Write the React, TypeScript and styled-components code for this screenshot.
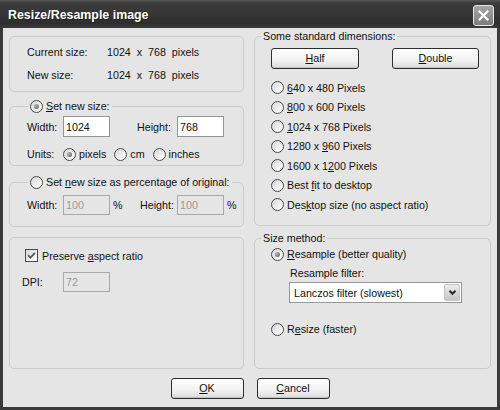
import React from "react";
import styled, { createGlobalStyle } from "styled-components";

const FONT = `"Liberation Sans", Arial, sans-serif`;
const BG = "#e5e5e5";
const FS = "10.7px";

const GlobalStyle = createGlobalStyle`
  html, body { margin: 0; padding: 0; background: #ffffff; }
  body { font-family: ${FONT}; font-size: ${FS}; color: #111; }
  * { box-sizing: border-box; }
`;

const Window = styled.div`
  width: 500px;
  height: 410px;
  display: flex;
  flex-direction: column;
  overflow: hidden;
`;

const TitleBar = styled.div`
  height: 28px;
  flex: none;
  display: flex;
  justify-content: space-between;
  align-items: flex-start;
  padding: 0 6px 0 8px;
  background: linear-gradient(#555555 0, #3c3c3c 3px, #363636 45%, #2e2e2e 85%, #3e3e3e 100%);
`;

const Title = styled.span`
  margin-top: 8px;
  font: bold 12.4px/15px ${FONT};
  color: #ffffff;
  text-shadow: 1px 1px 0 #1c1c1c;
`;

const CloseButton = styled.div`
  margin-top: 5px;
  width: 21px;
  height: 21px;
  border: 1px solid #e6e6e6;
  border-radius: 3px;
  background: linear-gradient(#a6a6a6, #7c7c7c);
  display: flex;
  align-items: center;
  justify-content: center;
`;

const Body = styled.div`
  flex: 1;
  background: ${BG};
  border: 3px solid #3a3a3a;
  border-top: none;
  display: grid;
  grid-template-columns: 235px 1fr;
  align-content: start;
  column-gap: 10px;
  padding: 8px 6px 0 6px;
`;

const Column = styled.div`
  display: flex;
  flex-direction: column;
`;

const Group = styled.div<{ $h: number; $mt?: number; $pad: string }>`
  position: relative;
  height: ${(p) => p.$h}px;
  margin-top: ${(p) => p.$mt ?? 0}px;
  padding: ${(p) => p.$pad};
  border: 1px solid #cbcbcb;
  border-radius: 5px;
  display: flex;
  flex-direction: column;
  align-items: flex-start;
`;

const Legend = styled.div<{ $left: number }>`
  position: absolute;
  top: -7px;
  left: ${(p) => p.$left}px;
  height: 13px;
  line-height: 13px;
  padding: 0 2px;
  background: ${BG};
  display: flex;
  align-items: center;
  gap: 3px;
  white-space: nowrap;
`;

const InfoGrid = styled.div`
  display: grid;
  grid-template-columns: 80px auto;
  grid-auto-rows: 14px;
  row-gap: 9px;
  line-height: 14px;
`;

const Value = styled.span`
  word-spacing: 3px;
`;

const FieldRow = styled.div<{ $h: number; $mt?: number; $ml?: number }>`
  display: flex;
  align-items: center;
  height: ${(p) => p.$h}px;
  margin-top: ${(p) => p.$mt ?? 0}px;
  margin-left: ${(p) => p.$ml ?? 0}px;
  white-space: nowrap;
`;

const Label = styled.span<{ $w?: number; $ml?: number }>`
  width: ${(p) => (p.$w ? `${p.$w}px` : "auto")};
  margin-left: ${(p) => p.$ml ?? 0}px;
  flex: none;
`;

const TextBox = styled.input<{ $h: number }>`
  width: 47px;
  height: ${(p) => p.$h}px;
  flex: none;
  margin: 0;
  padding: 0 2px;
  font: ${FS} ${FONT};
  color: #111;
  background: #ffffff;
  border: 1px solid #949494;
  outline: none;
  &:disabled {
    background: ${BG};
    color: #9a9a9a;
    border-color: #a8a8a8;
  }
`;

const Percent = styled.span<{ $w?: number }>`
  width: ${(p) => (p.$w ? `${p.$w}px` : "auto")};
  padding-left: 3px;
  flex: none;
`;

const RadioGroupRow = styled.div`
  display: flex;
  align-items: center;
  gap: 8px;
`;

const Choice = styled.label`
  display: flex;
  align-items: center;
  gap: 3px;
  white-space: nowrap;
`;

const RadioCircle = styled.span<{ $on?: boolean }>`
  position: relative;
  width: 13px;
  height: 13px;
  flex: none;
  border-radius: 50%;
  border: 1px solid #4a4a4a;
  background: linear-gradient(135deg, #d6d6d6 0%, #f4f4f4 70%, #ffffff 100%);
  &::after {
    content: "";
    display: ${(p) => (p.$on ? "block" : "none")};
    position: absolute;
    left: 3px;
    top: 3px;
    width: 5px;
    height: 5px;
    border-radius: 50%;
    background: radial-gradient(circle at 35% 35%, #b4b4b4, #5c5c5c);
  }
`;

const CheckBox = styled.span`
  width: 13px;
  height: 13px;
  flex: none;
  border: 1px solid #4a4a4a;
  background: linear-gradient(135deg, #d6d6d6 0%, #f4f4f4 70%, #ffffff 100%);
  display: flex;
  align-items: center;
  justify-content: center;
`;

const ButtonRow = styled.div`
  align-self: stretch;
  display: flex;
  justify-content: space-between;
`;

const PushButton = styled.div<{ $w: number }>`
  width: ${(p) => p.$w}px;
  height: 21px;
  border: 1px solid #2e2e2e;
  border-radius: 3px;
  background: linear-gradient(#ffffff 0%, #f2f2f2 60%, #e0e0e0 90%, #d2d2d2 100%);
  box-shadow: inset 0 -1px 0 #c4c4c4;
  display: flex;
  align-items: center;
  justify-content: center;
  line-height: 13px;
`;

const RadioList = styled.div`
  margin-top: 9px;
  display: flex;
  flex-direction: column;
`;

const ListRow = styled.div`
  height: 19.5px;
  display: flex;
  align-items: center;
`;

const SubLabel = styled.div`
  margin: 4px 0 0 19px;
  line-height: 14px;
`;

const Select = styled.div`
  margin: 2px 0 0 18px;
  width: 173px;
  height: 21px;
  border: 1px solid #979797;
  background: #ffffff;
  display: flex;
  align-items: center;
  padding: 0 1px 0 4px;
`;

const SelectText = styled.span`
  flex: 1;
`;

const DropButton = styled.span`
  width: 16px;
  height: 17px;
  border: 1px solid #c6c6c6;
  border-radius: 2px;
  background: linear-gradient(#ececec, #c6c6c6);
  display: flex;
  align-items: center;
  justify-content: center;
`;

const Footer = styled.div`
  grid-column: 1 / -1;
  margin-top: 9px;
  display: flex;
  justify-content: center;
  gap: 13px;
`;

const Acc = styled.u`
  text-decoration: underline;
  text-underline-offset: 1px;
`;

const Radio = ({ on, children }: { on?: boolean; children: React.ReactNode }) => (
  <Choice>
    <RadioCircle $on={on} />
    <span>{children}</span>
  </Choice>
);

export default function App() {
  return (
    <>
      <GlobalStyle />
      <Window>
        <TitleBar>
          <Title>Resize/Resample image</Title>
          <CloseButton>
            <svg width="11" height="11" viewBox="0 0 11 11">
              <path d="M1.5 1.5 L9.5 9.5 M9.5 1.5 L1.5 9.5" stroke="#ffffff" strokeWidth="2.2" strokeLinecap="square" />
            </svg>
          </CloseButton>
        </TitleBar>
        <Body>
          <Column>
            <Group $h={56} $pad="8px 0 0 17px">
              <InfoGrid>
                <span>Current size:</span>
                <Value>1024 x 768 pixels</Value>
                <span>New size:</span>
                <Value>1024 x 768 pixels</Value>
              </InfoGrid>
            </Group>

            <Group $h={60} $mt={14} $pad="9px 0 0 17px">
              <Legend $left={18}>
                <RadioCircle $on />
                <span>
                  <Acc>S</Acc>et new size:
                </span>
              </Legend>
              <FieldRow $h={21}>
                <Label $w={36}>Width:</Label>
                <TextBox $h={21} defaultValue="1024" />
                <Label $w={40} $ml={27}>Height:</Label>
                <TextBox $h={21} defaultValue="768" />
              </FieldRow>
              <FieldRow $h={16} $mt={9}>
                <Label $w={36}>Units:</Label>
                <RadioGroupRow>
                  <Radio on>pixels</Radio>
                  <Radio>cm</Radio>
                  <Radio>inches</Radio>
                </RadioGroupRow>
              </FieldRow>
            </Group>

            <Group $h={45} $mt={16} $pad="12px 0 0 17px">
              <Legend $left={18}>
                <RadioCircle />
                <span>
                  Set <Acc>n</Acc>ew size as percentage of original:
                </span>
              </Legend>
              <FieldRow $h={20}>
                <Label $w={36}>Width:</Label>
                <TextBox $h={20} defaultValue="100" disabled />
                <Percent $w={30}>%</Percent>
                <Label $w={37}>Height:</Label>
                <TextBox $h={20} defaultValue="100" disabled />
                <Percent>%</Percent>
              </FieldRow>
            </Group>

            <Group $h={132} $mt={10} $pad="11px 0 0 12px">
              <FieldRow $h={13} $ml={3}>
                <CheckBox>
                  <svg width="9" height="9" viewBox="0 0 9 9">
                    <path d="M1 4.2 L3.4 6.6 L8 1.8" stroke="#5a5a5a" strokeWidth="1.8" fill="none" />
                  </svg>
                </CheckBox>
                <Label $ml={4}>
                  Preserve <Acc>a</Acc>spect ratio
                </Label>
              </FieldRow>
              <FieldRow $h={20} $mt={10}>
                <Label $w={41}>DPI:</Label>
                <TextBox $h={20} defaultValue="72" disabled />
              </FieldRow>
            </Group>
          </Column>

          <Column>
            <Group $h={190} $pad="11px 11px 0 16px">
              <Legend $left={6}>Some standard dimensions:</Legend>
              <ButtonRow>
                <PushButton $w={88}>
                  <span>
                    <Acc>H</Acc>alf
                  </span>
                </PushButton>
                <PushButton $w={87}>
                  <span>
                    <Acc>D</Acc>ouble
                  </span>
                </PushButton>
              </ButtonRow>
              <RadioList>
                <ListRow>
                  <Radio>
                    <Acc>6</Acc>40 x 480 Pixels
                  </Radio>
                </ListRow>
                <ListRow>
                  <Radio>
                    <Acc>8</Acc>00 x 600 Pixels
                  </Radio>
                </ListRow>
                <ListRow>
                  <Radio>
                    <Acc>1</Acc>024 x 768 Pixels
                  </Radio>
                </ListRow>
                <ListRow>
                  <Radio>
                    1280 x <Acc>9</Acc>60 Pixels
                  </Radio>
                </ListRow>
                <ListRow>
                  <Radio>
                    1600 x 1<Acc>2</Acc>00 Pixels
                  </Radio>
                </ListRow>
                <ListRow>
                  <Radio>
                    Best <Acc>f</Acc>it to desktop
                  </Radio>
                </ListRow>
                <ListRow>
                  <Radio>
                    Des<Acc>k</Acc>top size (no aspect ratio)
                  </Radio>
                </ListRow>
              </RadioList>
            </Group>

            <Group $h={131} $mt={12} $pad="7px 0 0 16px">
              <Legend $left={6}>Size method:</Legend>
              <FieldRow $h={16}>
                <Radio on>
                  <Acc>R</Acc>esample (better quality)
                </Radio>
              </FieldRow>
              <SubLabel>Resample filter:</SubLabel>
              <Select>
                <SelectText>Lanczos filter (slowest)</SelectText>
                <DropButton>
                  <svg width="9" height="7" viewBox="0 0 9 7">
                    <path d="M1.5 1.8 L4.5 4.8 L7.5 1.8" stroke="#2a2a2a" strokeWidth="2" fill="none" />
                  </svg>
                </DropButton>
              </Select>
              <FieldRow $h={16} $mt={18}>
                <Radio>
                  R<Acc>e</Acc>size (faster)
                </Radio>
              </FieldRow>
            </Group>
          </Column>

          <Footer>
            <PushButton $w={73}>
              <span>
                <Acc>O</Acc>K
              </span>
            </PushButton>
            <PushButton $w={73}>
              <span>
                <Acc>C</Acc>ancel
              </span>
            </PushButton>
          </Footer>
        </Body>
      </Window>
    </>
  );
}
